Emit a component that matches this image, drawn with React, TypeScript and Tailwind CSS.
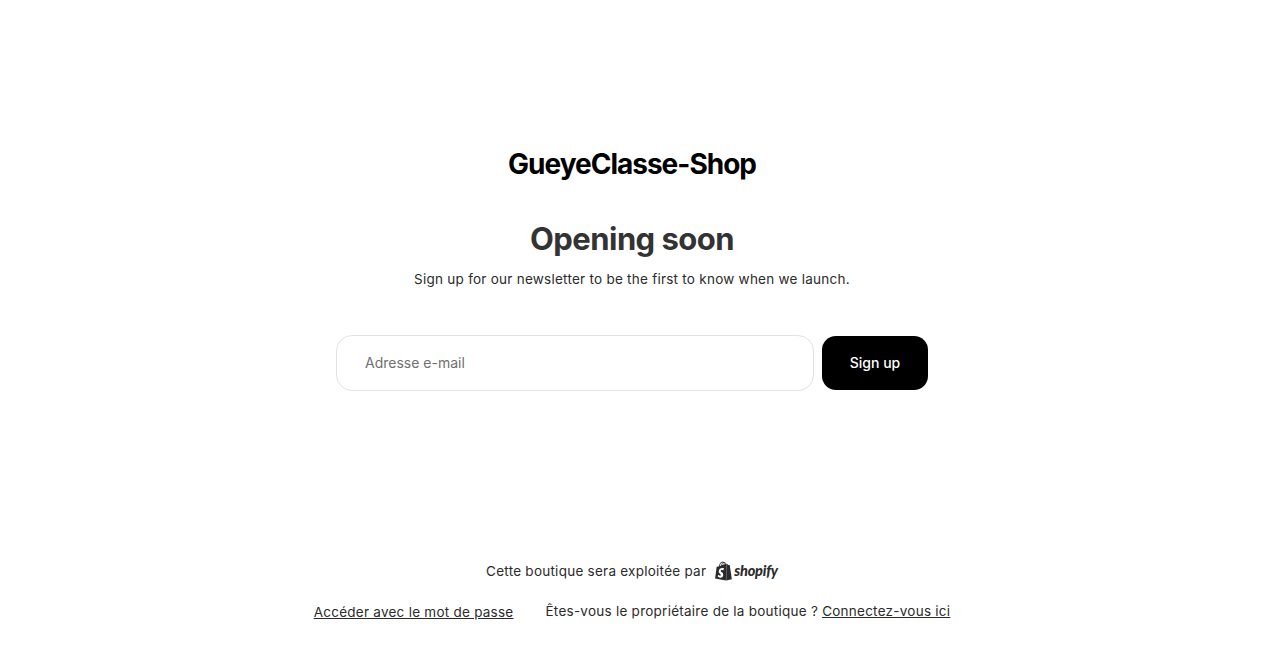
import React from "react";

function ShopifyBag() {
  return (
    <svg viewBox="0 0 24 24" className="w-[19px] h-[20px]" fill="#2b2b2b" aria-hidden="true">
      <path d="M15.337 23.979l7.216-1.561s-2.604-17.613-2.625-17.73c-.018-.116-.114-.192-.211-.192s-1.929-.136-1.929-.136-1.275-1.274-1.439-1.411c-.045-.037-.075-.057-.121-.074l-.914 21.104h.023zM11.71 11.305s-.81-.424-1.774-.424c-1.447 0-1.504.906-1.504 1.141 0 1.232 3.24 1.715 3.24 4.629 0 2.295-1.44 3.76-3.406 3.76-2.354 0-3.54-1.465-3.54-1.465l.646-2.086s1.245 1.066 2.28 1.066c.675 0 .975-.545.975-.932 0-1.619-2.654-1.694-2.654-4.359-.034-2.237 1.571-4.416 4.827-4.416 1.257 0 1.875.361 1.875.361l-.945 2.715-.02.01zM11.17.83c.136 0 .271.038.405.135-.984.465-2.064 1.639-2.508 3.992-.656.213-1.293.405-1.889.578C7.697 3.75 8.951.84 11.17.84V.83zm1.235 2.949v.135c-.754.232-1.583.484-2.394.736.466-1.777 1.333-2.645 2.085-2.971.193.501.309 1.176.309 2.1zm.539-2.234c.694.074 1.141.867 1.429 1.755-.349.114-.735.231-1.158.366v-.252c0-.752-.096-1.371-.271-1.871v.002zm2.992 1.289c-.02 0-.06.021-.078.021s-.289.075-.714.21c-.423-1.233-1.176-2.37-2.508-2.37h-.115C12.135.209 11.669 0 11.265 0 8.159 0 6.675 3.877 6.21 5.846c-1.194.365-2.063.636-2.16.674-.675.213-.694.232-.772.87-.075.462-1.83 14.063-1.83 14.063L15.009 24l.927-21.166z" />
    </svg>
  );
}

export default function App() {
  return (
    <div className="min-h-[653px] bg-white flex flex-col items-center font-['Inter',sans-serif] text-[#2b2b2b]">
      <h1 className="mt-[145px] text-[28px] leading-[38px] font-bold tracking-[-1px] text-black">GueyeClasse-Shop</h1>
      <h2 className="mt-[34px] text-[31px] leading-[44px] font-bold tracking-[-0.55px] text-[#333333]">Opening soon</h2>
      <p className="mt-[7px] text-[13.5px] leading-[22px] tracking-[0.25px]">Sign up for our newsletter to be the first to know when we launch.</p>
      <form className="mt-[45px] flex items-center gap-2 w-[592px]">
        <input
          type="email"
          placeholder="Adresse e-mail"
          className="w-[478px] h-[56px] rounded-[16px] border border-[#e2e2e2] bg-white pl-[28px] pr-4 pb-[1px] text-[14px] outline-none placeholder:text-[#707070]"
        />
        <button type="button" className="w-[106px] h-[54px] rounded-[14px] bg-black text-white text-[14px] font-medium pb-[1px]">Sign up</button>
      </form>
      <div className="mt-[170px] flex items-center text-[13.5px] leading-5 tracking-[0.25px]">
        <span>Cette boutique sera exploitée par</span>
        <span className="ml-2 flex items-center gap-[1px]">
          <ShopifyBag />
          <span className="font-['Lato',sans-serif] font-black italic text-[14.5px] tracking-[-0.2px] text-[#2b2b2b]">shopify</span>
        </span>
      </div>
      <div className="mt-[20px] flex items-center gap-8 text-[13.5px] leading-5 tracking-[0.25px]">
        <a href="#" className="underline translate-y-[1px]">Accéder avec le mot de passe</a>
        <span>Êtes-vous le propriétaire de la boutique ? <a href="#" className="underline">Connectez-vous ici</a></span>
      </div>
    </div>
  );
}
